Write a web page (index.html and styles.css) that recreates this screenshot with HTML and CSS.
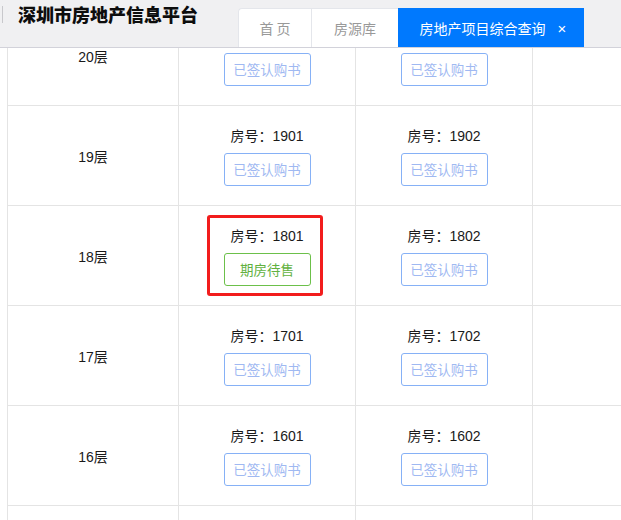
FILE: index.html
```html
<!DOCTYPE html>
<html lang="zh-CN">
<head>
    <meta charset="UTF-8">
    <meta name="viewport" content="width=device-width, initial-scale=1.0">
    <title>深圳市房地产信息平台</title>
    <link rel="stylesheet" href="styles.css">
</head>
<body>
    <header class="topbar">
        <div class="brand">
            <span class="brand-rule"></span>
            <h1 class="site-title">深圳市房地产信息平台</h1>
        </div>
        <nav class="tabs">
            <a class="tab tab-home">首 页</a>
            <a class="tab tab-stock">房源库</a>
            <a class="tab tab-active">房地产项目综合查询<span class="tab-close">×</span></a>
        </nav>
    </header>

    <main class="board">
        <table class="floor-table">
            <tr>
                <td class="floor">20层</td>
                <td><div class="room"><p class="room-no">房号：2001</p><button class="btn btn-signed">已签认购书</button></div></td>
                <td><div class="room"><p class="room-no">房号：2002</p><button class="btn btn-signed">已签认购书</button></div></td>
                <td class="blank"></td>
            </tr>
            <tr>
                <td class="floor">19层</td>
                <td><div class="room"><p class="room-no">房号：1901</p><button class="btn btn-signed">已签认购书</button></div></td>
                <td><div class="room"><p class="room-no">房号：1902</p><button class="btn btn-signed">已签认购书</button></div></td>
                <td class="blank"></td>
            </tr>
            <tr>
                <td class="floor">18层</td>
                <td><div class="room room-marked"><p class="room-no">房号：1801</p><button class="btn btn-forsale">期房待售</button></div></td>
                <td><div class="room"><p class="room-no">房号：1802</p><button class="btn btn-signed">已签认购书</button></div></td>
                <td class="blank"></td>
            </tr>
            <tr>
                <td class="floor">17层</td>
                <td><div class="room"><p class="room-no">房号：1701</p><button class="btn btn-signed">已签认购书</button></div></td>
                <td><div class="room"><p class="room-no">房号：1702</p><button class="btn btn-signed">已签认购书</button></div></td>
                <td class="blank"></td>
            </tr>
            <tr>
                <td class="floor">16层</td>
                <td><div class="room"><p class="room-no">房号：1601</p><button class="btn btn-signed">已签认购书</button></div></td>
                <td><div class="room"><p class="room-no">房号：1602</p><button class="btn btn-signed">已签认购书</button></div></td>
                <td class="blank"></td>
            </tr>
            <tr>
                <td class="floor">15层</td>
                <td><div class="room"><p class="room-no">房号：1501</p><button class="btn btn-signed">已签认购书</button></div></td>
                <td><div class="room"><p class="room-no">房号：1502</p><button class="btn btn-signed">已签认购书</button></div></td>
                <td class="blank"></td>
            </tr>
        </table>
    </main>
</body>
</html>
```

FILE: styles.css
```css
html, body {
    margin: 0;
    padding: 0;
    background: #fff;
    overflow: hidden;
}
body {
    font-family: "Liberation Sans", "Noto Sans CJK SC", sans-serif;
    font-size: 14px;
    color: #1a1a1a;
}

/* top bar sits over the scrolled table */
.topbar {
    position: fixed;
    top: 0;
    left: 0;
    right: 0;
    z-index: 10;
    height: 47px;
    display: flex;
    background-color: #f0f0f2;
    border-bottom: 1px solid #d2d2da;
}
.brand {
    width: 238px;
    display: flex;
    align-items: flex-start;
    padding-top: 3px;
    box-sizing: border-box;
}
.brand-rule {
    width: 1px;
    height: 17px;
    margin: 3px 15px 0 2px;
    background-color: #c8c8cc;
}
.site-title {
    margin: 0;
    font-family: "Noto Sans CJK SC", sans-serif;
    font-size: 18px;
    line-height: 22px;
    font-weight: 900;
    color: #0d0d0d;
}
.tabs {
    display: flex;
    align-self: flex-end;
    height: 39px;
}
.tab {
    display: flex;
    align-items: center;
    justify-content: center;
    box-sizing: border-box;
    font-family: "Noto Sans CJK SC", sans-serif;
    font-size: 14px;
    color: #999;
    background-color: #fff;
    border-top: 1px solid #e4e6eb;
}
.tab-home {
    width: 73px;
    border-left: 1px solid #e4e6eb;
    border-top-left-radius: 4px;
}
.tab-stock {
    width: 87px;
    border-left: 1px solid #e4e6eb;
}
.tab-active {
    width: 186px;
    color: #fff;
    background-color: #0079fe;
    border-top-color: #0079fe;
    padding-left: 4px;
}
.tab-close {
    margin-left: 12px;
    font-family: "Liberation Sans", sans-serif;
    font-size: 15px;
}

/* floor table */
.board {
    padding: 6px 0 0 7px;
}
.floor-table {
    border-collapse: collapse;
    table-layout: fixed;
    width: 800px;
}
.floor-table td {
    height: 99px;
    padding: 0;
    text-align: center;
    vertical-align: middle;
    border: 1px solid #e4e4e4;
    border-top: none;
}
.floor-table td.floor {
    width: 170px;
}
.floor-table td:nth-child(2),
.floor-table td:nth-child(3) {
    width: 176px;
}
.room {
    position: relative;
    display: inline-block;
    width: 87px;
}
.room-no {
    margin: 0 0 7px;
    line-height: 20px;
    white-space: nowrap;
}
.btn {
    width: 87px;
    height: 33px;
    padding: 0;
    font-family: "Noto Sans CJK SC", sans-serif;
    font-size: 13.5px;
    background-color: #fff;
    border-radius: 3px;
    cursor: pointer;
}
.btn-signed {
    color: #9fb9f2;
    border: 1px solid #86b1f6;
}
.btn-forsale {
    color: #62b13f;
    border: 1px solid #6cc04a;
}

/* highlight around the marked room */
.room-marked::after {
    content: "";
    position: absolute;
    top: -11px;
    bottom: -10px;
    left: -17px;
    right: -12px;
    border: 3px solid #f21d1d;
    border-radius: 3px;
}
```
